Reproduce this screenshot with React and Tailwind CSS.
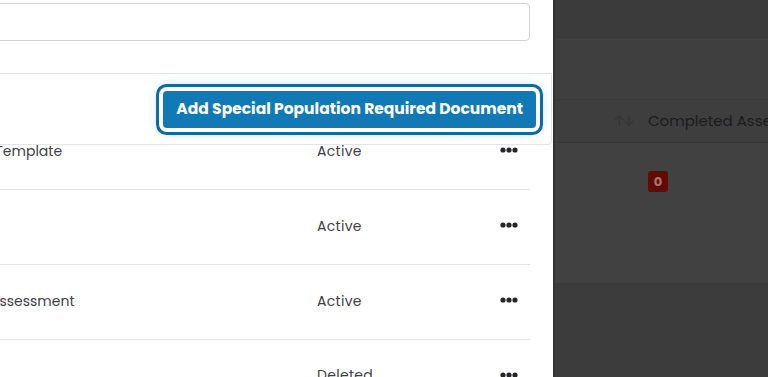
import React from "react";

function Dots() {
  return (
    <svg width="18" height="6" viewBox="0 0 18 6" className="block">
      <circle cx="3" cy="3" r="2.6" fill="#27272a" />
      <circle cx="9" cy="3" r="2.6" fill="#27272a" />
      <circle cx="15" cy="3" r="2.6" fill="#27272a" />
    </svg>
  );
}

function Row({ name, nameShift, status, textNudge }) {
  return (
    <div className="flex h-[75px] shrink-0 items-center border-b border-[#e2e4e8] mr-[23px]">
      <div className={"w-[317px] shrink-0 overflow-hidden " + textNudge}>
        <span className={"block whitespace-nowrap text-[14px] text-[#3f3f46] " + nameShift}>{name}</span>
      </div>
      <div className={"flex-1 text-[14px] tracking-[0.3px] text-[#3f3f46] " + textNudge}>{status}</div>
      <div className="w-[30px] shrink-0 flex justify-start -mt-[5px]">
        <Dots />
      </div>
    </div>
  );
}

export default function App() {
  return (
    <div className="flex h-[377px] w-[768px] overflow-hidden font-['Poppins','Inter','Noto_Sans',sans-serif]">
      <div className="w-[553px] shrink-0 bg-white flex flex-col overflow-hidden">
        <div className="pt-[3px] pr-[23px] shrink-0">
          <div className="-ml-[10px] h-[38px] rounded-[4px] border border-[#cfd3d8] bg-white" />
        </div>
        <div className="mt-[32px] shrink-0 relative z-10 h-[72px] bg-white border-t border-b border-r border-[#e3e5e8] rounded-br-[4px] mr-[1px] flex items-center justify-end pr-[15px]">
          <button className="h-[37px] rounded-[4px] bg-[#1079b6] px-[13px] text-[15.5px] font-bold text-white ring-[3px] ring-[#0d6aa6] ring-offset-[4px] ring-offset-white shadow-[0_0_14px_4px_rgba(16,121,182,0.28)] whitespace-nowrap">
            Add Special Population Required Document
          </button>
        </div>
        <div className="-mt-[30px] flex flex-col shrink-0">
          <Row name="Assessment Template" nameShift="-ml-[93px]" status="Active" textNudge="-mt-[2px]" />
          <Row name="" nameShift="" status="Active" textNudge="-mt-[1px]" />
          <Row name="Assessment" nameShift="-ml-[10px]" status="Active" textNudge="-mt-[1px]" />
          <Row name="" nameShift="" status="Deleted" textNudge="-mt-[3px]" />
        </div>
      </div>
      <div className="flex-1 flex flex-col bg-[#3e3e3f] border-l-2 border-[#333334]">
        <div className="h-[38px] shrink-0 bg-[#3b3b3c] border-b border-[#373738]" />
        <div className="h-[62px] shrink-0 bg-[#3f3f40] border-b border-[#3a3a3b]" />
        <div className="h-[43px] shrink-0 flex items-center border-b border-[#38383a] bg-[#3e3e3f]">
          <span className="ml-[58px] text-[15px] text-[#343435] tracking-[-3px]">↑↓</span>
          <span className="ml-[16px] whitespace-nowrap text-[15px] text-[#1b1b1c]">Completed Assessments</span>
        </div>
        <div className="h-[141px] shrink-0 bg-[#414142] border-b border-[#3a3a3b] pt-[28px] pl-[93px]">
          <div className="h-[21px] w-[20px] rounded-[3px] bg-[#640a04] flex items-center justify-center text-[13px] font-bold text-[#a57770]">
            0
          </div>
        </div>
        <div className="flex-1 bg-[#3c3c3d]" />
      </div>
    </div>
  );
}
